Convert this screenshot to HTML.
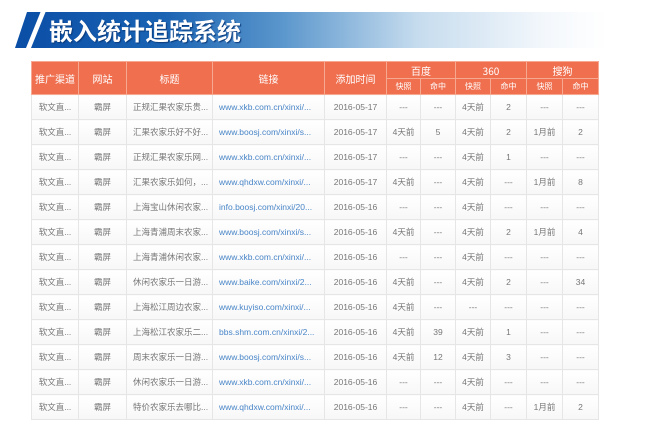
<!DOCTYPE html>
<html><head><meta charset="utf-8"><style>
body{margin:0;width:650px;height:432px;background:#fff;overflow:hidden;position:relative;font-family:"Liberation Sans","Noto Sans CJK SC",sans-serif}
.ban{position:absolute;left:15px;top:12px;width:592px;height:36px;background:linear-gradient(90deg,#0a4ea6 0%,#1a63b3 25%,#5a96cc 45%,#c6dcee 68%,#f4f8fc 90%,#fff 100%);clip-path:polygon(12px 0,100% 0,100% 100%,0 100%)}
.slash{position:absolute;top:12px;width:5px;height:36px;background:#fff;transform:skewX(-22deg);transform-origin:bottom left;left:26px}
.title{position:absolute;left:49px;top:13px;font-size:24px;font-weight:bold;color:#fff;line-height:34px;text-shadow:1px 1px 1px #0b3a7a;font-family:"Noto Sans CJK SC",sans-serif}
table{position:absolute;left:31px;top:61px;border-collapse:collapse;table-layout:fixed;font-size:8.5px;font-family:"Liberation Sans","Noto Sans CJK SC",sans-serif}
th{background:#ef6f4f;color:#fff;font-weight:normal;border:1px solid #f6a890;padding:0;font-size:10px;font-family:"Noto Sans CJK SC",sans-serif}
th.s{font-size:8px;height:15px}
td{height:24px;border:1px solid #e6e6e6;color:#777;text-align:center;padding:0;white-space:nowrap;overflow:hidden;background:linear-gradient(#fff,#f7f7f7)}
td.l{text-align:left;padding-left:6px}
td.a{color:#4a86c8;text-align:left;padding-left:6px}
</style></head><body>
<div class="ban"></div><div class="slash"></div>
<div class="title">嵌入统计追踪系统</div>
<table>
<colgroup><col style="width:47px"><col style="width:48px"><col style="width:86px"><col style="width:112px"><col style="width:62px"><col style="width:34px"><col style="width:35px"><col style="width:35px"><col style="width:36px"><col style="width:36px"><col style="width:36px"></colgroup>
<tr style="height:17px"><th rowspan="2">推广渠道</th><th rowspan="2">网站</th><th rowspan="2">标题</th><th rowspan="2">链接</th><th rowspan="2">添加时间</th><th colspan="2">百度</th><th colspan="2">360</th><th colspan="2">搜狗</th></tr>
<tr><th class="s">快照</th><th class="s">命中</th><th class="s">快照</th><th class="s">命中</th><th class="s">快照</th><th class="s">命中</th></tr>
<tr><td>软文直...</td><td>霸屏</td><td class="l">正规汇果农家乐贵...</td><td class="a">www.xkb.com.cn/xinxi/...</td><td>2016-05-17</td><td>---</td><td>---</td><td>4天前</td><td>2</td><td>---</td><td>---</td></tr>
<tr><td>软文直...</td><td>霸屏</td><td class="l">汇果农家乐好不好...</td><td class="a">www.boosj.com/xinxi/s...</td><td>2016-05-17</td><td>4天前</td><td>5</td><td>4天前</td><td>2</td><td>1月前</td><td>2</td></tr>
<tr><td>软文直...</td><td>霸屏</td><td class="l">正规汇果农家乐网...</td><td class="a">www.xkb.com.cn/xinxi/...</td><td>2016-05-17</td><td>---</td><td>---</td><td>4天前</td><td>1</td><td>---</td><td>---</td></tr>
<tr><td>软文直...</td><td>霸屏</td><td class="l">汇果农家乐如何，...</td><td class="a">www.qhdxw.com/xinxi/...</td><td>2016-05-17</td><td>4天前</td><td>---</td><td>4天前</td><td>---</td><td>1月前</td><td>8</td></tr>
<tr><td>软文直...</td><td>霸屏</td><td class="l">上海宝山休闲农家...</td><td class="a">info.boosj.com/xinxi/20...</td><td>2016-05-16</td><td>---</td><td>---</td><td>4天前</td><td>---</td><td>---</td><td>---</td></tr>
<tr><td>软文直...</td><td>霸屏</td><td class="l">上海青浦周末农家...</td><td class="a">www.boosj.com/xinxi/s...</td><td>2016-05-16</td><td>4天前</td><td>---</td><td>4天前</td><td>2</td><td>1月前</td><td>4</td></tr>
<tr><td>软文直...</td><td>霸屏</td><td class="l">上海青浦休闲农家...</td><td class="a">www.xkb.com.cn/xinxi/...</td><td>2016-05-16</td><td>---</td><td>---</td><td>4天前</td><td>---</td><td>---</td><td>---</td></tr>
<tr><td>软文直...</td><td>霸屏</td><td class="l">休闲农家乐一日游...</td><td class="a">www.baike.com/xinxi/2...</td><td>2016-05-16</td><td>4天前</td><td>---</td><td>4天前</td><td>2</td><td>---</td><td>34</td></tr>
<tr><td>软文直...</td><td>霸屏</td><td class="l">上海松江周边农家...</td><td class="a">www.kuyiso.com/xinxi/...</td><td>2016-05-16</td><td>4天前</td><td>---</td><td>---</td><td>---</td><td>---</td><td>---</td></tr>
<tr><td>软文直...</td><td>霸屏</td><td class="l">上海松江农家乐二...</td><td class="a">bbs.shm.com.cn/xinxi/2...</td><td>2016-05-16</td><td>4天前</td><td>39</td><td>4天前</td><td>1</td><td>---</td><td>---</td></tr>
<tr><td>软文直...</td><td>霸屏</td><td class="l">周末农家乐一日游...</td><td class="a">www.boosj.com/xinxi/s...</td><td>2016-05-16</td><td>4天前</td><td>12</td><td>4天前</td><td>3</td><td>---</td><td>---</td></tr>
<tr><td>软文直...</td><td>霸屏</td><td class="l">休闲农家乐一日游...</td><td class="a">www.xkb.com.cn/xinxi/...</td><td>2016-05-16</td><td>---</td><td>---</td><td>4天前</td><td>---</td><td>---</td><td>---</td></tr>
<tr><td>软文直...</td><td>霸屏</td><td class="l">特价农家乐去哪比...</td><td class="a">www.qhdxw.com/xinxi/...</td><td>2016-05-16</td><td>---</td><td>---</td><td>4天前</td><td>---</td><td>1月前</td><td>2</td></tr>
</table>
</body></html>
